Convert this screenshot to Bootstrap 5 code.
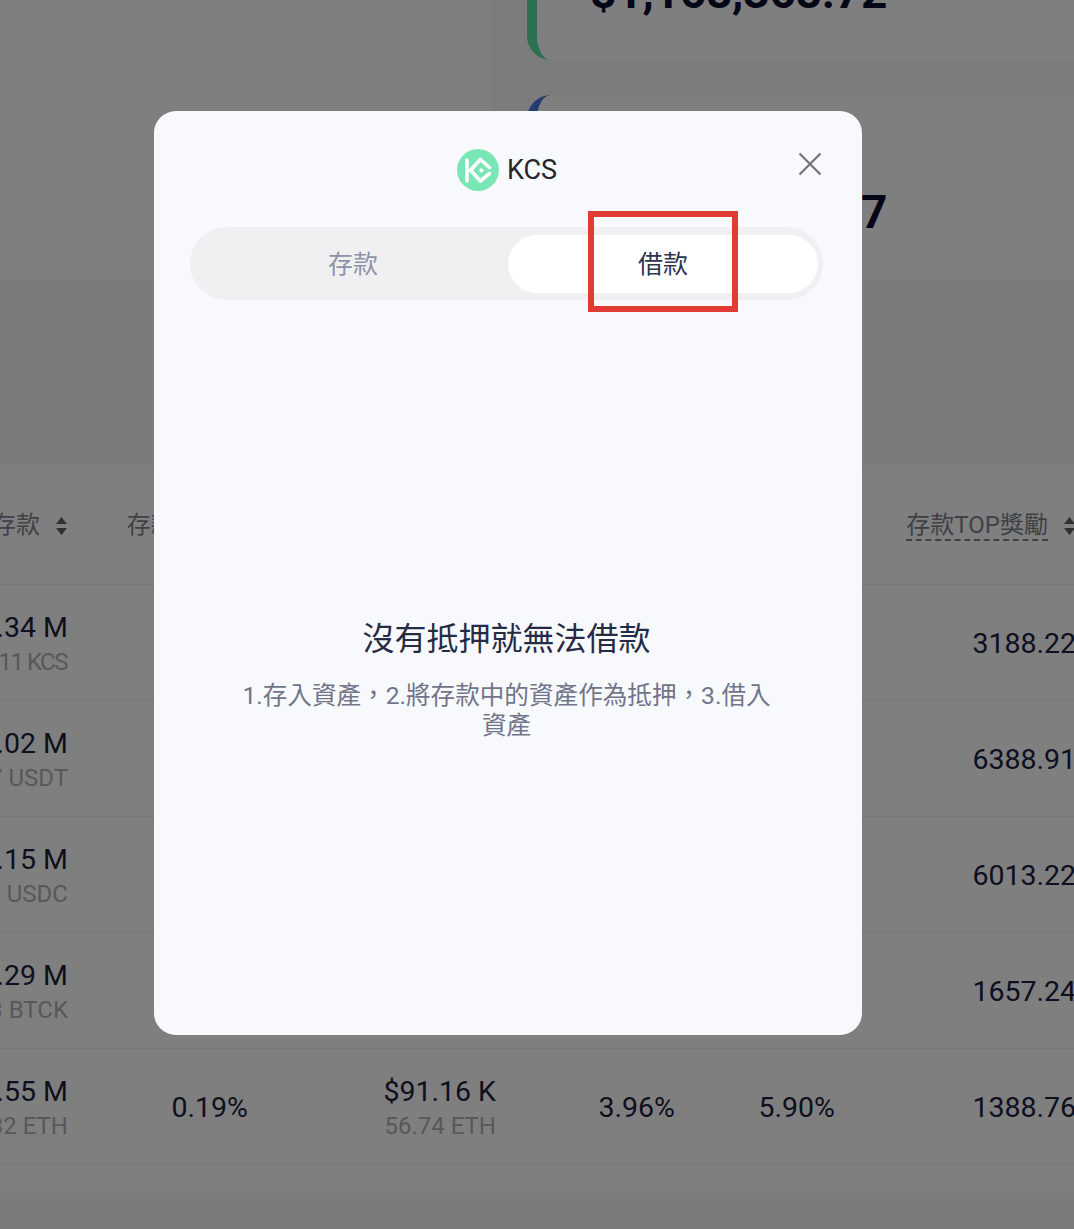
<!DOCTYPE html>
<html lang="zh-Hant">
<head>
<meta charset="utf-8">
<title>KCS</title>
<link href="https://cdn.jsdelivr.net/npm/bootstrap@5.3.0/dist/css/bootstrap.min.css" rel="stylesheet">
<style>
html,body{height:1229px;overflow:hidden;}
body{background:#f6f6f6;font-family:Roboto,"Noto Sans CJK SC",sans-serif;color:#1c2140;}
.hero-wrap{height:280px;}
.hero-left{width:490px;background:#fff;}
.hero-right{background:#f8f8f8;padding-left:37px;overflow:hidden;gap:35px;}
.stat-box{height:185px;flex:none;background:#fff;border-radius:24px 0 0 24px;border-left:10px solid #3fc08a;padding:97px 0 0 53px;font-size:46px;line-height:40px;font-weight:700;letter-spacing:-.2px;color:#0a0f2c;white-space:nowrap;}
.stat-green{border-left-color:#5ce0a5;}
.stat-blue{border-left-color:#4a78e0;}
.gap-band{height:185px;}
.table-wrap{height:728px;background:#fff;overflow:hidden;}
.market-table{width:1176px;margin:0 0 0 -100px;table-layout:fixed;--bs-table-bg:transparent;--bs-table-border-color:#f0f0f2;color:#1c2140;}
.market-table>thead>tr>th{height:119px;padding:2px 0 0;font-weight:400;font-size:24px;color:#80838f;vertical-align:middle;text-align:right;white-space:nowrap;}
.market-table>tbody>tr>td{height:116px;padding:4px 0 0;vertical-align:middle;text-align:right;white-space:nowrap;font-size:28.5px;line-height:34px;}
.market-table>tbody>tr>td.two-line{padding-top:6px;}
.sub-val{display:block;font-size:24px;line-height:34px;color:#b0b0b6;}
.sub-tight{letter-spacing:-1.5px;margin-right:1px;}
.head-tip{border-bottom:2px dashed #80838f;line-height:27px;display:inline-block;}
.sort-ico{width:13px;height:20px;margin-left:15px;vertical-align:-3px;fill:#62626a;}
.sheet{margin:111px 0 0 154px;width:708px;height:924px;background:#f8f9fd;border:0;border-radius:22px;padding:38px 39px 0 36px;position:relative;}
.sheet-title{height:42px;font-size:27px;line-height:44px;color:#25262b;gap:8px;padding-left:1px;}
.sheet-close{top:41px;right:40px;width:24px;height:24px;}
.pill-track{margin-top:36px;height:73px;background:#f0f0f2;border-radius:37px;padding:8px 5px 7px 8px;}
.pill-item{flex:1 1 0;border-radius:29px;font-size:25px;line-height:60px;height:58px;text-align:center;color:#8e92a6;}
.pill-on{background:#fff;color:#2e3350;}
.mark-box{left:434px;top:100px;width:150px;height:101px;border:6px solid #e13b35;}
.empty-box{margin-top:317px;text-align:center;padding:0 50px;}
.empty-head{font-size:32px;line-height:44px;color:#262b45;font-weight:400;margin:0;}
.empty-text{font-size:24.6px;line-height:30px;color:#71758a;margin:20px 0 0;}
</style>
</head>
<body>
<div class="hero-wrap d-flex">
  <div class="hero-left"></div>
  <div class="hero-right flex-grow-1 d-flex flex-column justify-content-end">
    <div class="stat-box stat-green">$1,168,368.72</div>
    <div class="stat-box stat-blue">$1,138,256.57</div>
  </div>
</div>
<div class="gap-band"></div>
<div class="table-wrap">
  <table class="table market-table">
    <colgroup><col style="width:168px"><col style="width:180px"><col style="width:248px"><col style="width:179px"><col style="width:160px"><col style="width:241px"></colgroup>
    <thead>
      <tr>
        <th>總存款<svg class="sort-ico" viewBox="0 0 13 20"><path d="M6.5 1 12 8H1zM6.5 19 1 12h11z"/></svg></th>
        <th>存款APY<svg class="sort-ico" viewBox="0 0 13 20"><path d="M6.5 1 12 8H1zM6.5 19 1 12h11z"/></svg></th>
        <th></th><th></th><th></th>
        <th><span class="head-tip">存款TOP獎勵</span><svg class="sort-ico" viewBox="0 0 13 20"><path d="M6.5 1 12 8H1zM6.5 19 1 12h11z"/></svg></th>
      </tr>
    </thead>
    <tbody>
      <tr><td class="two-line">$1.34 M<span class="sub-val sub-tight">562.11 KCS</span></td><td></td><td></td><td></td><td></td><td>3188.22</td></tr>
      <tr><td class="two-line">$3.02 M<span class="sub-val">3.07 USDT</span></td><td></td><td></td><td></td><td></td><td>6388.91</td></tr>
      <tr><td class="two-line">$2.15 M<span class="sub-val">2.15 USDC</span></td><td></td><td></td><td></td><td></td><td>6013.22</td></tr>
      <tr><td class="two-line">$1.29 M<span class="sub-val">1.63 BTCK</span></td><td></td><td></td><td></td><td></td><td>1657.24</td></tr>
      <tr><td class="two-line">$1.55 M<span class="sub-val">962.32 ETH</span></td><td>0.19%</td><td class="two-line">$91.16 K<span class="sub-val">56.74 ETH</span></td><td>3.96%</td><td>5.90%</td><td>1388.76</td></tr>
    </tbody>
  </table>
</div>

<div class="modal-backdrop fade show"></div>
<div class="modal d-block" tabindex="-1">
  <div class="modal-content sheet">
    <div class="sheet-title d-flex justify-content-center align-items-center">
      <svg width="42" height="42" viewBox="0 0 42 42"><circle cx="21" cy="21" r="21" fill="#78e6b5"/><path d="M10 11v21" stroke="#fff" stroke-width="3.6" stroke-linecap="round" fill="none"/><path d="M32.500 18.500 23.400 10.500 13.500 21.300 23.400 32 32.500 24.500" stroke="#fff" stroke-width="3.600" stroke-linejoin="round" stroke-linecap="round" fill="none"/><path d="M24.400 18.800 27 21.400 24.400 24 21.800 21.400z" fill="#fff"/></svg>
      <span>KCS</span>
    </div>
    <svg class="sheet-close position-absolute" viewBox="0 0 24 24"><path d="M1.500 1.500 22.500 22.500M22.500 1.500 1.500 22.500" stroke="#70727c" stroke-width="2.200" fill="none"/></svg>
    <div class="pill-track d-flex">
      <div class="pill-item">存款</div>
      <div class="pill-item pill-on">借款</div>
    </div>
    <div class="mark-box position-absolute"></div>
    <div class="empty-box">
      <h5 class="empty-head">沒有抵押就無法借款</h5>
      <p class="empty-text">1.存入資產，2.將存款中的資產作為抵押，3.借入資產</p>
    </div>
  </div>
</div>
<script src="https://cdn.jsdelivr.net/npm/bootstrap@5.3.0/dist/js/bootstrap.bundle.min.js"></script>
</body>
</html>
